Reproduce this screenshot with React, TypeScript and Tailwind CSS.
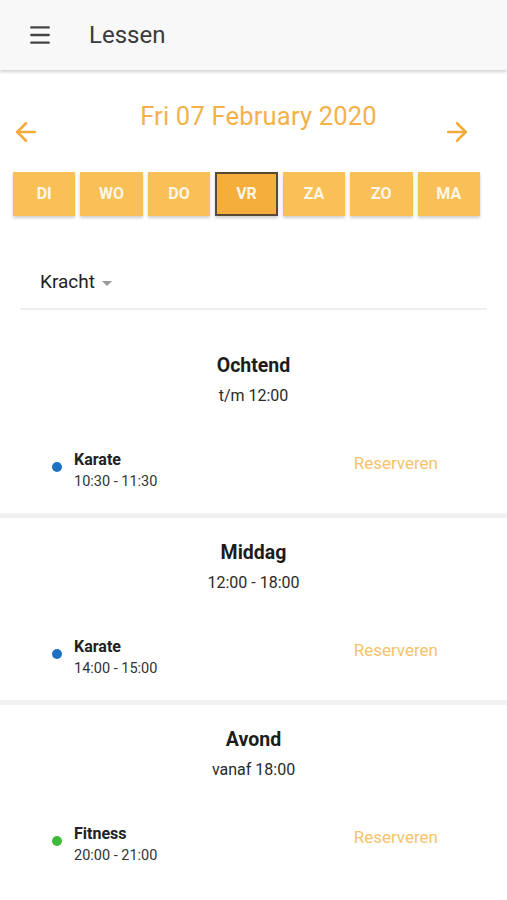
import { ArrowLeft, ArrowRight, Menu } from "lucide-react";

type Lesson = { name: string; time: string; color: string };
type Part = { title: string; range: string; lessons: Lesson[] };

const days = ["DI", "WO", "DO", "VR", "ZA", "ZO", "MA"];

const parts: Part[] = [
  { title: "Ochtend", range: "t/m 12:00", lessons: [{ name: "Karate", time: "10:30 - 11:30", color: "bg-[#1f72c1]" }] },
  { title: "Middag", range: "12:00 - 18:00", lessons: [{ name: "Karate", time: "14:00 - 15:00", color: "bg-[#1f72c1]" }] },
  { title: "Avond", range: "vanaf 18:00", lessons: [{ name: "Fitness", time: "20:00 - 21:00", color: "bg-[#3fb93a]" }] },
];

export default function App() {
  return (
    <div className="min-h-[900px] w-[507px] bg-white font-['Roboto',sans-serif]">
      <header className="flex h-[70px] items-center bg-[#f8f8f8] shadow-[0_2px_3px_rgba(0,0,0,0.18)]">
        <Menu className="ml-[27px] h-[26px] w-[26px] text-[#444]" strokeWidth={2.2} />
        <h1 className="ml-[36px] text-[24px] text-[#3a3a3a]">Lessen</h1>
      </header>

      <div className="relative mt-[30px] h-[56px]">
        <p className="pl-[10px] text-center text-[25.5px] leading-[32px] tracking-[0.2px] text-[#f4b14a]">Fri 07 February 2020</p>
        <ArrowLeft className="absolute left-[11px] top-[17px] h-[30px] w-[30px] text-[#f4ac3d]" strokeWidth={2} />
        <ArrowRight className="absolute right-[35px] top-[17px] h-[30px] w-[30px] text-[#f4ac3d]" strokeWidth={2} />
      </div>

      <div className="mx-[13px] mt-[16px] grid w-[467px] grid-cols-7 gap-[5px]">
        {days.map((d) => (
          <div
            key={d}
            className={`flex h-[44px] items-center justify-center text-[16px] font-bold text-[#fff6e6] shadow-[0_2px_3px_rgba(0,0,0,0.2)] ${
              d === "VR" ? "border-2 border-[#5a4a33] bg-[#f5ad3b]" : "bg-[#f8c057]"
            }`}
          >
            {d}
          </div>
        ))}
      </div>

      <div className="mx-[20px] mt-[40px] flex h-[54px] items-center border-b-2 border-[#eeeeee] pl-[20px]">
        <span className="text-[19px] text-[#222]">Kracht</span>
        <span className="ml-[7px] mt-[2px] h-0 w-0 border-x-[5px] border-t-[5px] border-x-transparent border-t-[#999]" />
      </div>

      <div className="mt-[21px]">
        {parts.map((p, i) => (
          <section key={p.title} className={i > 0 ? "border-t-[5px] border-[#f1f1f2]" : ""}>
            <div className="pt-[23px] text-center">
              <h2 className="text-[19.5px] font-bold leading-[24px] text-[#1c1c1c]">{p.title}</h2>
              <p className="mt-[8px] text-[16px] leading-[20px] text-[#2a2a2a]">{p.range}</p>
            </div>
            {p.lessons.map((l) => (
              <div key={l.name + l.time} className="flex items-start pb-[21px] pl-[52px] pr-[69px] pt-[44px]">
                <span className={`mt-[12px] h-[10px] w-[10px] rounded-full ${l.color}`} />
                <div className="ml-[12px] flex-1">
                  <p className="text-[16px] font-bold leading-[20px] text-[#222]">{l.name}</p>
                  <p className="mt-[2px] text-[14.5px] leading-[20px] text-[#333]">{l.time}</p>
                </div>
                <span className="mt-[2px] text-[17px] leading-[22px] text-[#f7c26a]">Reserveren</span>
              </div>
            ))}
          </section>
        ))}
      </div>
    </div>
  );
}
